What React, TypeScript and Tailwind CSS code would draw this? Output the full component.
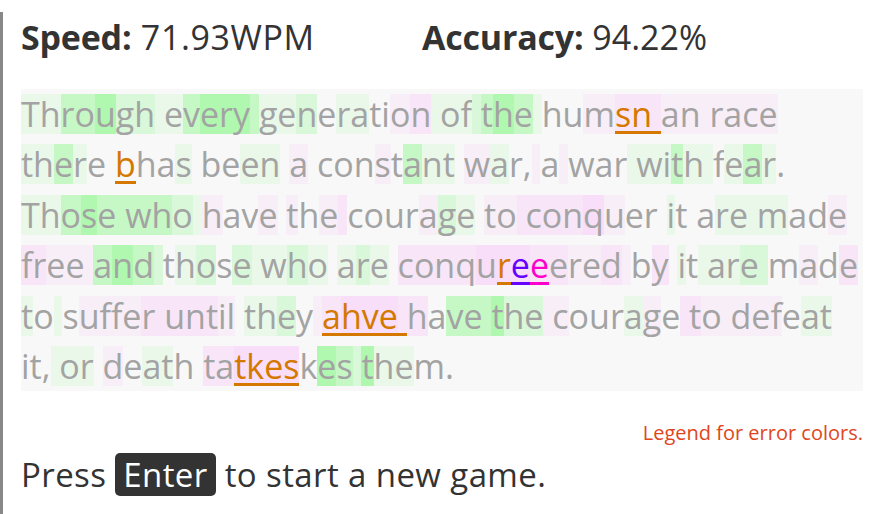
import React from "react";

type Seg = [string, string, string?];

const BG: Record<string, string> = {
  "0": "",
  a: "bg-[#eaf8ea]",
  b: "bg-[#d9f8d9]",
  c: "bg-[#c6f8c6]",
  d: "bg-[#b0f8b0]",
  p: "bg-[#f8eef8]",
  q: "bg-[#f8e6f8]",
  r: "bg-[#f8def8]",
};

const ERR: Record<string, string> = {
  O: "text-[#d47800] border-b-[3px] border-[#d47800]",
  V: "text-[#6600ff] border-b-[3px] border-[#6600ff]",
  M: "text-[#ff00cc] border-b-[3px] border-[#ff00cc]",
};

const LINES: Seg[][] = [
  [
    ["Th", "a"], ["ro", "c"], ["u", "d"], ["gh", "b"], [" ", "a"], ["e", "a"], ["v", "c"], ["ery", "d"], [" ", "c"],
    ["ge", "a"], ["n", "b"], ["e", "0"], ["ra", "a"], ["ti", "0"], ["o", "p"], ["n", "q"], [" of", "a"], [" ", "b"],
    ["t", "c"], ["h", "d"], ["e", "c"], [" ", "a"], ["hu", "0"], ["m", "p"], ["sn ", "q", "O"], ["an race", "p"],
  ],
  [
    ["th", "a"], ["e", "c"], ["r", "a"], ["e ", "0"], ["b", "0", "O"], ["ha", "0"], ["s", "a"], [" be", "0"], ["en", "a"],
    [" ", "0"], ["a", "p"], [" con", "0"], ["s", "p"], ["t", "0"], ["a", "c"], ["nt", "a"], [" ", "0"], ["w", "p"],
    ["a", "a"], ["r,", "0"], [" ", "p"], ["a", "0"], [" ", "p"], ["war", "0"], [" wi", "a"], ["t", "c"], ["h ", "a"],
    ["f", "0"], ["e", "a"], ["a", "c"], ["r", "a"], [".", "0"],
  ],
  [
    ["Th", "a"], ["o", "c"], ["s", "d"], ["e wh", "c"], ["o", "b"], [" ", "a"], ["h", "p"], ["av", "0"], ["e", "p"],
    [" ", "0"], ["t", "p"], ["h", "0"], ["e", "p"], [" ", "q"], ["cour", "0"], ["a", "p"], ["g", "b"], ["e", "a"],
    [" ", "0"], ["to", "p"], [" con", "q"], ["q", "r"], ["u", "p"], ["er ", "0"], ["i", "a"], ["t a", "0"],
    ["re m", "a"], ["ad", "0"], ["e", "p"],
  ],
  [
    ["fr", "q"], ["ee ", "p"], ["a", "c"], ["n", "d"], ["d", "c"], [" ", "b"], ["t", "0"], ["h", "a"], ["o", "b"],
    ["s", "0"], ["e", "b"], [" w", "a"], ["h", "b"], ["o", "a"], [" ", "0"], ["a", "a"], ["r", "b"], ["e", "a"],
    [" ", "0"], ["con", "q"], ["q", "q"], ["u", "r"], ["r", "r", "O"], ["e", "r", "V"], ["e", "q", "M"], ["e", "q"],
    ["re", "p"], ["d", "q"], [" ", "p"], ["b", "0"], ["y", "q"], [" ", "0"], ["i", "a"], ["t", "0"], [" ar", "a"],
    ["e ", "b"], ["m", "0"], ["a", "p"], ["d", "0"], ["e", "q"],
  ],
  [
    ["t", "a"], ["o", "0"], [" ", "a"], ["s", "0"], ["uffe", "p"], ["r unt", "q"], ["il", "p"], [" ", "0"], ["th", "a"],
    ["e", "b"], ["y", "0"], [" ", "p"], ["a", "q", "O"], ["hve", "r", "O"], [" ", "q", "O"], ["h", "q"], ["a", "0"],
    ["ve ", "c"], ["t", "d"], ["he", "b"], [" c", "p"], ["our", "0"], ["a", "a"], ["g", "p"], ["e", "0"], [" t", "q"],
    ["o def", "p"], ["e", "0"], ["at", "a"],
  ],
  [
    ["it,", "0"], [" or", "a"], [" ", "0"], ["d", "p"], ["e", "0"], ["at", "a"], ["h ", "0"], ["ta", "q"],
    ["tkes", "r", "O"], ["k", "0"], ["e", "d"], ["s", "c"], [" ", "b"], ["t", "d"], ["he", "a"], ["m.", "0"],
  ],
];

export default function App() {
  return (
    <div
      className="min-h-screen border-l-[3px] border-[#888888] bg-white pl-[18px] text-[#333333]"
      style={{ fontFamily: '"Open Sans", "Noto Sans", sans-serif' }}
    >
      <div className="mt-[12px] flex h-[50px] text-[34px] leading-[50px]">
        <div className="w-[401px] whitespace-pre">
          <span className="font-bold tracking-[-0.2px]">Speed:</span>
          <span className="tracking-[0.6px]"> 71.93WPM</span>
        </div>
        <div className="whitespace-pre">
          <span className="font-bold tracking-[-0.2px]">Accuracy:</span> 94.22%
        </div>
      </div>

      <div className="mt-[27px] flex w-[842px] flex-col gap-[10.4px] bg-[#f8f8f8] py-[5px] text-[34px] leading-[40px] text-[#a3a3a3]">
        {LINES.map((line, i) => (
          <div key={i} className="flex h-[40px]">
            {line.map(([t, bg, err], j) => (
              <span
                key={j}
                className={`h-[40px] whitespace-pre ${BG[bg]} ${err ? ERR[err] : ""}`}
              >
                {t}
              </span>
            ))}
          </div>
        ))}
      </div>

      <div className="mt-[30px] w-[842px] text-right text-[20px] leading-[24px] text-[#e0461c]">
        Legend for error colors.
      </div>

      <div className="mt-[8px] h-[43px] whitespace-pre text-[33px] leading-[43px] tracking-[0.4px]">
        Press{" "}
        <kbd
          className="inline-block h-[43px] rounded-[5px] bg-[#333333] px-[8px] text-[33px] leading-[43px] text-white"
          style={{ fontFamily: '"Open Sans", "Noto Sans", sans-serif' }}
        >
          Enter
        </kbd>{" "}
        to start a new game.
      </div>
    </div>
  );
}
